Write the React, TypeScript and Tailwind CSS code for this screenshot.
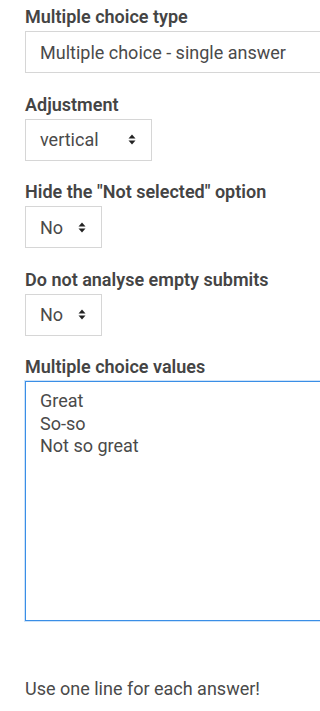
import { useState } from "react";

const font = { fontFamily: "Roboto, 'Liberation Sans', sans-serif" };

function Arrows() {
  return (
    <svg width="8" height="11" viewBox="0 0 8 11" className="shrink-0">
      <path d="M4 0.5 L7.5 4.5 L0.5 4.5 Z" fill="#222" />
      <path d="M4 10.5 L7.5 6.5 L0.5 6.5 Z" fill="#222" />
    </svg>
  );
}

function Label({ children }: { children: React.ReactNode }) {
  return <div className="mb-0.5 text-[18px] leading-6 font-semibold text-[#444]">{children}</div>;
}

function Field({ label, children }: { label: string; children: React.ReactNode }) {
  return (
    <div className="mb-[19.5px]">
      <Label>{label}</Label>
      {children}
    </div>
  );
}

function Select({ value, width }: { value: string; width: string }) {
  return (
    <div className={`flex h-[42px] items-center justify-between border border-[#d6d6d6] bg-white pl-[14px] pr-[15px] text-[18px] text-[#4a4a4a] ${width}`}>
      <span>{value}</span>
      <Arrows />
    </div>
  );
}

export default function App() {
  const [values, setValues] = useState("Great\nSo-so\nNot so great");

  return (
    <div className="min-h-[711px] w-full overflow-hidden bg-white pl-[25px] pt-[5px]" style={font}>
      <Field label="Multiple choice type">
        <div className="flex h-[42px] items-center overflow-hidden whitespace-nowrap border border-r-0 border-[#d6d6d6] bg-white pl-[14px] text-[18px] text-[#4a4a4a]">
          Multiple choice - single answer
        </div>
      </Field>
      <Field label="Adjustment">
        <Select value="vertical" width="w-[127px]" />
      </Field>
      <Field label={'Hide the "Not selected" option'}>
        <Select value="No" width="w-[77px]" />
      </Field>
      <Field label="Do not analyse empty submits">
        <Select value="No" width="w-[77px]" />
      </Field>
      <div>
        <Label>Multiple choice values</Label>
        <textarea
          value={values}
          onChange={(e) => setValues(e.target.value)}
          className="block h-[240px] w-full resize-none border border-r-0 border-[#3a8ee6] pl-[14px] pt-[8px] text-[18px] leading-[22.5px] text-[#4a4a4a] shadow-[0_0_0_1px_rgba(58,142,230,0.25)] outline-none"
        />
      </div>
      <p className="mt-[56px] text-[18px] leading-6 text-[#4a4a4a]">Use one line for each answer!</p>
    </div>
  );
}
